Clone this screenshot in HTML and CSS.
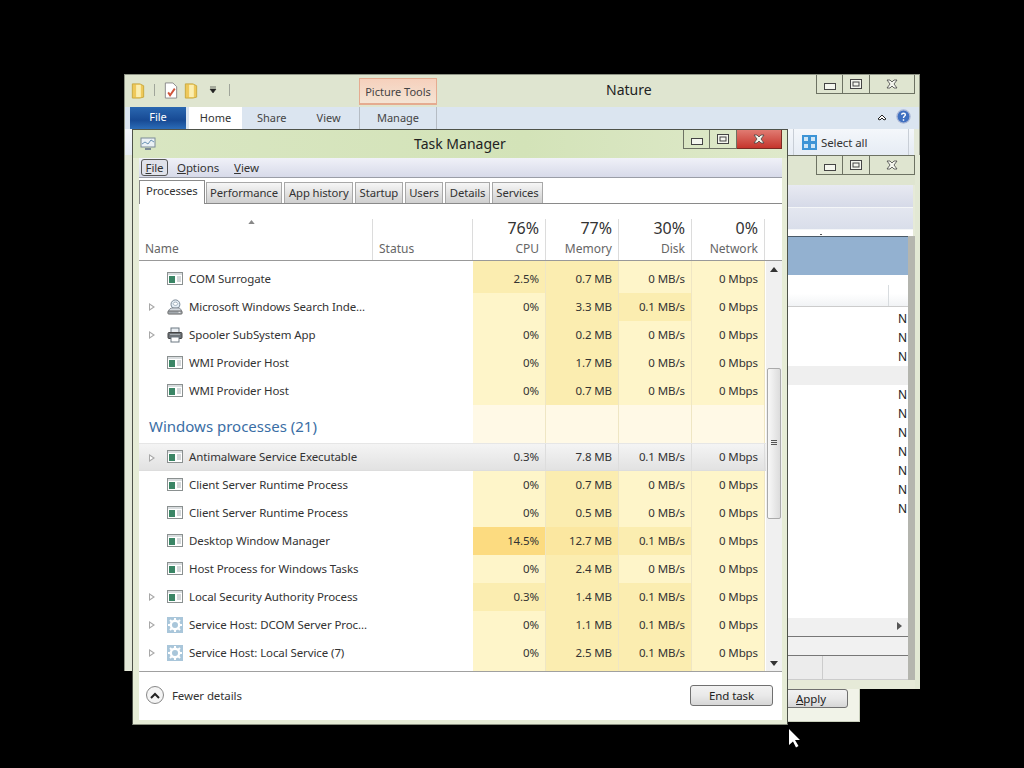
FILE: index.html
```html
<!DOCTYPE html>
<html lang="en">
<head>
  <meta charset="UTF-8">
  <title>Task Manager</title>
  <link rel="stylesheet" href="styles.css">
</head>
<body>
  <svg class="defs" width="0" height="0">
    <symbol id="i-app" viewBox="0 0 16 14">
      <rect x="0.500" y="0.500" width="15" height="12" fill="#fff" stroke="#8a9090"/>
      <rect x="1" y="1" width="14" height="2" fill="#d9dddf"/>
      <rect x="2" y="4" width="6" height="7" fill="#3a8565"/>
      <path d="M10 5h4M10 7h4M10 9h4" stroke="#a8b0b4"/>
    </symbol>
    <symbol id="i-search" viewBox="0 0 18 18">
      <circle cx="9.500" cy="6" r="5" fill="#e4edf5" stroke="#6d7d8c"/>
      <path d="M7 5c0-2 5-2 5 0 0 3-5 3-5 0z" fill="#fff" stroke="#9aa8b4"/>
      <path d="M1.500 14c1-3 3-4 5-4h6c2 0 3 1 4 4z" fill="#d5dae0" stroke="#6d7680"/>
      <rect x="1" y="13.500" width="16" height="3.500" rx="1" fill="#a2a8ad" stroke="#666"/>
      <path d="M13 15h2" stroke="#fff"/>
    </symbol>
    <symbol id="i-printer" viewBox="0 0 16 16">
      <rect x="4" y="1" width="8" height="5" fill="#e9eef3" stroke="#6d7882"/>
      <rect x="1" y="5.500" width="14" height="6" rx="1" fill="#6d7378" stroke="#444"/>
      <path d="M3 7.500h10" stroke="#a4abb0"/>
      <rect x="4" y="10" width="8" height="5" fill="#fff" stroke="#6d7882"/>
    </symbol>
    <symbol id="i-gear" viewBox="0 0 16 16">
      <rect width="16" height="16" fill="#a9c6da"/>
      <circle cx="8" cy="8" r="4.200" fill="none" stroke="#fff" stroke-width="2.400"/>
      <path d="M8 1v3M8 12v3M1 8h3M12 8h3M3 3l2 2M11 11l2 2M13 3l-2 2M5 11l-2 2" stroke="#fff" stroke-width="2"/>
    </symbol>
    <symbol id="i-folder" viewBox="0 0 14 18">
      <path d="M1 2h8l4 2v12l-4 1H1z" fill="#eec85a" stroke="#c9a83c"/>
      <path d="M5 3h5v13H5z" fill="#fbeeb0"/>
    </symbol>
    <symbol id="i-min" viewBox="0 0 12 7">
      <rect x="0.500" y="0.500" width="11" height="6" fill="#f4f6ee" stroke="#444"/>
    </symbol>
    <symbol id="i-max" viewBox="0 0 12 10">
      <rect x="0.500" y="0.500" width="11" height="9" fill="#f4f6ee" stroke="#444"/>
      <rect x="3" y="3" width="6" height="4" fill="none" stroke="#444"/>
    </symbol>
    <symbol id="i-close" viewBox="0 0 12 10">
      <path d="M1 1h3l2 2 2-2h3L8 5l3 4H8L6 7 4 9H1l3-4z" fill="#f4f6ee" stroke="#444" stroke-width="0.800"/>
    </symbol>
  </svg>

  <!-- explorer window behind task manager -->
  <div class="window nature">
    <div class="nature-title">
      <div class="qat">
        <svg class="qat-folder"><use href="#i-folder"/></svg>
        <span class="qat-sep"></span>
        <svg class="qat-doc" viewBox="0 0 14 18">
          <path d="M1 1h8l4 4v12H1z" fill="#fff" stroke="#888"/>
          <path d="M4 11l2 3 5-7" fill="none" stroke="#d0553a" stroke-width="2"/>
        </svg>
        <svg class="qat-folder"><use href="#i-folder"/></svg>
        <svg class="qat-arrow" viewBox="0 0 8 8"><path d="M1 1h6M1 3h6L4 7z" fill="#222" stroke="#222" stroke-width="0.600"/></svg>
        <span class="qat-sep"></span>
      </div>
      <div class="context-tab">Picture Tools</div>
      <div class="nature-name">Nature</div>
      <div class="winbtns">
        <span class="winbtn"><svg class="ico-min"><use href="#i-min"/></svg></span>
        <span class="winbtn"><svg class="ico-max"><use href="#i-max"/></svg></span>
        <span class="winbtn wide"><svg class="ico-close"><use href="#i-close"/></svg></span>
      </div>
    </div>
    <div class="ribbon-tabs">
      <span class="rtab file">File</span>
      <span class="rtab home">Home</span>
      <span class="rtab">Share</span>
      <span class="rtab">View</span>
      <span class="rtab manage">Manage</span>
      <svg class="collapse" viewBox="0 0 10 8"><path d="M1 6l4-4 4 4-2 1-2-2-2 2z" fill="#fff" stroke="#222"/></svg>
      <svg class="help" viewBox="0 0 16 16">
        <circle cx="8" cy="8" r="7" fill="#3f6fc0" stroke="#a9b6d6" stroke-width="1.400"/>
        <path d="M6 6c0-2 4-2 4 0 0 1.500-2 1.500-2 3.500M8 11v1.500" fill="none" stroke="#fff" stroke-width="1.500"/>
      </svg>
    </div>
    <div class="ribbon-body">
      <div class="select-all">
        <svg class="grid-ico" viewBox="0 0 15 15">
          <rect width="15" height="15" fill="#3d94d6"/>
          <path d="M2 2h4v4H2zM9 2h4v4H9zM2 9h4v4H2zM9 9h4v4H9z" fill="#cfe6f6"/>
        </svg>
        Select all
      </div>
    </div>
  </div>

  <!-- second window, only its right side shows -->
  <div class="window folder">
    <div class="folder-title">
      <div class="winbtns">
        <span class="winbtn"><svg class="ico-min"><use href="#i-min"/></svg></span>
        <span class="winbtn"><svg class="ico-max"><use href="#i-max"/></svg></span>
        <span class="winbtn wide"><svg class="ico-close"><use href="#i-close"/></svg></span>
      </div>
    </div>
    <div class="folder-inner">
      <div class="strip"></div>
      <div class="strip second"></div>
      <div class="ruler"><span class="dot"></span></div>
      <div class="selected-band"></div>
      <div class="list-head"></div>
      <div class="list">
        <div class="n-row">N</div>
        <div class="n-row">N</div>
        <div class="n-row">N</div>
        <div class="n-row band"></div>
        <div class="n-row">N</div>
        <div class="n-row">N</div>
        <div class="n-row">N</div>
        <div class="n-row">N</div>
        <div class="n-row">N</div>
        <div class="n-row">N</div>
        <div class="n-row">N</div>
      </div>
      <div class="hscroll"><svg class="harrow" viewBox="0 0 5 8"><path d="M0 0l5 4-5 4z" fill="#555"/></svg></div>
      <div class="status-a"></div>
      <div class="status-b"></div>
    </div>
  </div>

  <div class="window apply-win">
    <button class="btn apply"><u>A</u>pply</button>
  </div>

  <!-- task manager -->
  <div class="window tm">
    <div class="tm-title">
      <svg class="tm-logo" viewBox="0 0 16 14">
        <rect x="1" y="1" width="14" height="9" fill="#eaf1f5" stroke="#7b8a96"/>
        <path d="M2 7l3-2 3 2 3-4 3 2" fill="none" stroke="#6b93b4"/>
        <path d="M5 12h6" stroke="#7b8a96" stroke-width="2"/>
      </svg>
      <div class="tm-name">Task Manager</div>
      <div class="winbtns tm-btns">
        <span class="winbtn"><svg class="ico-min"><use href="#i-min"/></svg></span>
        <span class="winbtn"><svg class="ico-max"><use href="#i-max"/></svg></span>
        <span class="winbtn closing"><svg class="ico-close"><use href="#i-close"/></svg></span>
      </div>
    </div>
    <div class="tm-body">
      <div class="menu">
        <span class="menu-item open"><u>F</u>ile</span>
        <span class="menu-item"><u>O</u>ptions</span>
        <span class="menu-item"><u>V</u>iew</span>
      </div>
      <div class="tabs">
        <span class="tab active">Processes</span>
        <span class="tab">Performance</span>
        <span class="tab">App history</span>
        <span class="tab">Startup</span>
        <span class="tab">Users</span>
        <span class="tab">Details</span>
        <span class="tab">Services</span>
      </div>
      <div class="thead">
        <div class="th name-th"><svg class="sort" viewBox="0 0 8 5"><path d="M0 5l4-5 4 5z" fill="#888"/></svg>Name</div>
        <div class="th status-th">Status</div>
        <div class="th num"><b>76%</b>CPU</div>
        <div class="th num"><b>77%</b>Memory</div>
        <div class="th num"><b>30%</b>Disk</div>
        <div class="th num"><b>0%</b>Network</div>
      </div>
      <div class="tbody">
        <div class="rows">
          <!-- row scrolled mostly out of view -->
          <div class="row">
            <div class="pname"></div>
            <div class="c y2"></div><div class="c y2"></div><div class="c y1"></div><div class="c y1"></div>
          </div>
          <div class="row">
            <div class="pname"><i></i><svg class="pico"><use href="#i-app"/></svg>COM Surrogate</div>
            <div class="c y2">2.5%</div><div class="c y2">0.7 MB</div><div class="c y1">0 MB/s</div><div class="c y1">0 Mbps</div>
          </div>
          <div class="row">
            <div class="pname"><i class="exp"></i><svg class="pico"><use href="#i-search"/></svg>Microsoft Windows Search Inde...</div>
            <div class="c y1">0%</div><div class="c y2">3.3 MB</div><div class="c y2">0.1 MB/s</div><div class="c y1">0 Mbps</div>
          </div>
          <div class="row">
            <div class="pname"><i class="exp"></i><svg class="pico"><use href="#i-printer"/></svg>Spooler SubSystem App</div>
            <div class="c y1">0%</div><div class="c y2">0.2 MB</div><div class="c y1">0 MB/s</div><div class="c y1">0 Mbps</div>
          </div>
          <div class="row">
            <div class="pname"><i></i><svg class="pico"><use href="#i-app"/></svg>WMI Provider Host</div>
            <div class="c y1">0%</div><div class="c y2">1.7 MB</div><div class="c y1">0 MB/s</div><div class="c y1">0 Mbps</div>
          </div>
          <div class="row">
            <div class="pname"><i></i><svg class="pico"><use href="#i-app"/></svg>WMI Provider Host</div>
            <div class="c y1">0%</div><div class="c y2">0.7 MB</div><div class="c y1">0 MB/s</div><div class="c y1">0 Mbps</div>
          </div>
          <div class="row group">
            <div class="pname">Windows processes (21)</div>
            <div class="c"></div><div class="c"></div><div class="c"></div><div class="c"></div>
          </div>
          <div class="row hover">
            <div class="pname"><i class="exp"></i><svg class="pico"><use href="#i-app"/></svg>Antimalware Service Executable</div>
            <div class="c">0.3%</div><div class="c">7.8 MB</div><div class="c">0.1 MB/s</div><div class="c">0 Mbps</div>
          </div>
          <div class="row">
            <div class="pname"><i></i><svg class="pico"><use href="#i-app"/></svg>Client Server Runtime Process</div>
            <div class="c y1">0%</div><div class="c y2">0.7 MB</div><div class="c y1">0 MB/s</div><div class="c y1">0 Mbps</div>
          </div>
          <div class="row">
            <div class="pname"><i></i><svg class="pico"><use href="#i-app"/></svg>Client Server Runtime Process</div>
            <div class="c y1">0%</div><div class="c y2">0.5 MB</div><div class="c y1">0 MB/s</div><div class="c y1">0 Mbps</div>
          </div>
          <div class="row">
            <div class="pname"><i></i><svg class="pico"><use href="#i-app"/></svg>Desktop Window Manager</div>
            <div class="c y4">14.5%</div><div class="c y3">12.7 MB</div><div class="c y2">0.1 MB/s</div><div class="c y1">0 Mbps</div>
          </div>
          <div class="row">
            <div class="pname"><i></i><svg class="pico"><use href="#i-app"/></svg>Host Process for Windows Tasks</div>
            <div class="c y1">0%</div><div class="c y2">2.4 MB</div><div class="c y1">0 MB/s</div><div class="c y1">0 Mbps</div>
          </div>
          <div class="row">
            <div class="pname"><i class="exp"></i><svg class="pico"><use href="#i-app"/></svg>Local Security Authority Process</div>
            <div class="c y2">0.3%</div><div class="c y2">1.4 MB</div><div class="c y2">0.1 MB/s</div><div class="c y1">0 Mbps</div>
          </div>
          <div class="row">
            <div class="pname"><i class="exp"></i><svg class="pico"><use href="#i-gear"/></svg>Service Host: DCOM Server Proc...</div>
            <div class="c y1">0%</div><div class="c y2">1.1 MB</div><div class="c y2">0.1 MB/s</div><div class="c y1">0 Mbps</div>
          </div>
          <div class="row">
            <div class="pname"><i class="exp"></i><svg class="pico"><use href="#i-gear"/></svg>Service Host: Local Service (7)</div>
            <div class="c y1">0%</div><div class="c y2">2.5 MB</div><div class="c y2">0.1 MB/s</div><div class="c y1">0 Mbps</div>
          </div>
          <!-- next row, cut off by the footer -->
          <div class="row">
            <div class="pname"></div>
            <div class="c y1"></div><div class="c y2"></div><div class="c y2"></div><div class="c y1"></div>
          </div>
        </div>
        <div class="vscroll">
          <svg class="varrow" viewBox="0 0 8 5"><path d="M0 5l4-5 4 5z" fill="#333"/></svg>
          <div class="thumb"><span class="grip"></span></div>
          <svg class="varrow down" viewBox="0 0 8 5"><path d="M0 0l4 5 4-5z" fill="#333"/></svg>
        </div>
      </div>
      <div class="tm-foot">
        <div class="fewer">
          <span class="circle"><svg viewBox="0 0 10 7"><path d="M1 6l4-4 4 4" fill="none" stroke="#222" stroke-width="2"/></svg></span>
          Fewer details
        </div>
        <button class="btn end">End task</button>
      </div>
    </div>
  </div>

  <svg class="cursor" viewBox="0 0 13 19"><path d="M1 0l11 11H7l3.500 6-2.500 1.500L5 12.500 1 16z" fill="#fff"/></svg>
</body>
</html>
```

FILE: styles.css
```css
body {
  margin: 0;
  height: 768px;
  background: #000;
  overflow: hidden;
  position: relative;
  font-family: "Noto Sans", sans-serif;
  font-size: 11.5px;
  letter-spacing: -0.1px;
  color: #333;
}

svg { display: block; }
.defs { position: absolute; }

.window { position: absolute; box-sizing: border-box; }

/* caption buttons */
.winbtns { display: flex; }
.winbtn {
  width: 27px;
  height: 19px;
  display: flex;
  align-items: center;
  justify-content: center;
  border: 1px solid #6d7263;
  border-top: none;
  border-left-width: 0;
  box-sizing: border-box;
}
.winbtn:first-child { border-left-width: 1px; }
.winbtn.wide { width: 45px; }
.winbtn.closing {
  width: 45px;
  background: linear-gradient(to bottom, #e07b72, #c5352c);
  border-color: #7a2a22;
}
.ico-min { width: 12px; height: 7px; margin-top: 4px; }
.ico-max { width: 12px; height: 10px; }
.ico-close { width: 12px; height: 10px; }

/* nature window */
.nature {
  left: 124px;
  top: 74px;
  width: 796px;
  height: 597px;
  background: #e4e9d9;
  border: 1px solid #8e9385;
  border-bottom: none;
}
.nature-title {
  height: 32px;
  display: flex;
  background: #dfe5d0;
  position: relative;
}
.qat { display: flex; align-items: center; gap: 6px; padding: 0 0 0 6px; height: 30px; }
.qat-folder { width: 14px; height: 17px; }
.qat-doc { width: 14px; height: 17px; }
.qat-arrow { width: 8px; height: 8px; margin: 0 3px 0 5px; }
.qat-sep { width: 1px; height: 12px; background: #a0a59a; margin: 0 3px; }
.context-tab {
  position: absolute;
  left: 234px;
  top: 3px;
  width: 78px;
  height: 27px;
  line-height: 26px;
  text-align: center;
  font-size: 11px;
  letter-spacing: 0;
  color: #444;
  background: linear-gradient(to bottom, #f6d0bc, #f4e4d4);
  border: 1px solid #e5ab90;
  border-bottom-width: 2px;
  box-sizing: border-box;
}
.nature-name {
  position: absolute;
  left: 481px;
  top: 5px;
  font-size: 14px;
  letter-spacing: 0;
  color: #222;
}
.nature .winbtns { position: absolute; left: 691px; top: 0; }

.ribbon-tabs {
  height: 22px;
  display: flex;
  align-items: flex-end;
  background: #dbe5f0;
  padding-left: 5px;
  position: relative;
  font-size: 11px;
}
.rtab {
  height: 22px;
  line-height: 21px;
  padding: 0 15px;
  letter-spacing: 0;
  color: #444;
  box-sizing: border-box;
}
.rtab.file {
  width: 56px;
  padding: 0;
  text-align: center;
  color: #fff;
  line-height: 20px;
  background: linear-gradient(to bottom, #2a67b0, #174a94 60%, #2b6cb8);
}
.rtab.home { width: 53px; padding: 0; margin-left: 3px; text-align: center; background: #fff; color: #333; }
.rtab.manage { position: absolute; left: 234px; width: 78px; padding: 0; text-align: center; border: 1px solid #b5bcc4; border-width: 0 1px; }
.collapse { position: absolute; left: 752px; top: 6px; width: 10px; height: 8px; }
.help { position: absolute; left: 771px; top: 2px; width: 15px; height: 15px; }

.ribbon-body {
  height: 26px;
  margin-right: 5px;
  background: linear-gradient(to bottom, #f4f7fb, #e6ecf4);
  position: relative;
}
.select-all {
  position: absolute;
  left: 668px;
  top: 0;
  width: 116px;
  height: 26px;
  padding: 1px 0 0 8px;
  box-sizing: border-box;
  display: flex;
  align-items: center;
  gap: 4px;
  border: 1px solid #c8ced6;
  border-width: 0 1px;
}
.grid-ico { width: 15px; height: 15px; }

/* folder window on the right */
.folder {
  left: 700px;
  top: 155px;
  width: 220px;
  height: 534px;
  background: #e6ead8;
  border-right: 5px solid #e2e8d4;
}
.folder::after {
  content: "";
  position: absolute;
  right: 0;
  top: 81px;
  width: 7px;
  bottom: 9px;
  background: #b4b5ae;
}
.folder-title {
  height: 30px;
  display: flex;
  background: #dfe5d0;
  border-top: 1px solid #6d7263;
  box-sizing: border-box;
  padding: 0 0 0 116px;
}
.folder-inner { width: 200px; margin-left: 8px; }
.strip {
  height: 23px;
  margin-right: -5px;
  background: linear-gradient(to bottom, #e8eaf2, #d6dae8);
  border-bottom: 1px solid #f4f6f8;
  box-sizing: border-box;
}
.strip.second { height: 22px; background: linear-gradient(to bottom, #e4e7f0, #d9deea); }
.ruler { height: 6px; margin-right: -5px; background: #fff; position: relative; }
.dot { position: absolute; left: 112px; top: 4px; width: 2px; height: 1px; background: #555; }
.selected-band { height: 39px; background: #93b1d0; border-top: 1px solid #4a5a68; box-sizing: border-box; }
.list-head {
  height: 32px;
  background: linear-gradient(to bottom, #fff, #fff 60%, #f1f3f5);
  border-bottom: 1px solid #ccc;
  box-sizing: border-box;
  position: relative;
}
.list-head::after {
  content: "";
  position: absolute;
  left: 180px;
  top: 10px;
  bottom: 0;
  width: 1px;
  background: #d8dcdf;
}
.list { height: 311px; background: #fff; padding-top: 2px; box-sizing: border-box; }
.n-row {
  height: 19px;
  line-height: 19px;
  padding-left: 190px;
  font-size: 12px;
  color: #222;
  overflow: hidden;
}
.n-row.band { background: #efefef; }
.hscroll { height: 19px; background: #f0f0f0; border-bottom: 1px solid #777; position: relative; box-sizing: border-box; }
.harrow { position: absolute; left: 189px; top: 4px; width: 5px; height: 8px; }
.status-a { height: 19px; background: #f1f1f1; border-bottom: 1px solid #777; box-sizing: border-box; }
.status-b {
  height: 24px;
  background: linear-gradient(to right, #ececec 114px, #ccc 114px, #ccc 115px, #ececec 115px);
  border-bottom: 1px solid #ccc;
  box-sizing: border-box;
}

.apply-win {
  left: 700px;
  top: 689px;
  width: 160px;
  height: 33px;
  background: #f1f3e8;
  border-bottom: 1px solid #c9cfbc;
  border-right: 1px solid #c9cfbc;
}
.btn.apply { position: absolute; left: 74px; top: 0; width: 74px; height: 19px; }

/* task manager */
.tm {
  left: 132px;
  top: 129px;
  width: 656px;
  height: 596px;
  background: #e6ecd6;
  border: 1px solid #4e5249;
  border-bottom-color: #8a8f80;
  padding: 0 6px 4px;
  display: flex;
  flex-direction: column;
}
.tm-title {
  height: 28px;
  flex: none;
  display: flex;
  align-items: center;
  background: linear-gradient(to right, #d9e6c2, #d3e3b8 60%, #dfe9cb);
  margin: 0 -6px;
  position: relative;
}
.tm-logo { width: 16px; height: 14px; margin-left: 7px; }
.tm-name { position: absolute; left: 281px; top: 4px; font-size: 14px; letter-spacing: 0; color: #222; }
.tm-btns { position: absolute; right: 5px; top: 0; }

.tm-body {
  flex: 1;
  display: flex;
  flex-direction: column;
  background: #fff;
  width: 643px;
  min-height: 0;
}

.menu {
  height: 20px;
  flex: none;
  display: flex;
  align-items: center;
  padding-left: 2px;
  gap: 3px;
  background: linear-gradient(to bottom, #f0f1f8, #d7dae9);
  border-bottom: 1px solid #9a9da6;
  box-sizing: border-box;
}
.menu-item { padding: 0 6px; height: 17px; line-height: 18px; box-sizing: border-box; }
.menu-item.open {
  width: 27px;
  background: #e0e2ea;
  border: 1px solid #555;
  border-radius: 3px;
  line-height: 16px;
  padding: 0;
  text-align: center;
}

.tabs {
  height: 26px;
  flex: none;
  display: flex;
  align-items: flex-end;
  gap: 2px;
  border-bottom: 1px solid #8a8a8a;
  box-sizing: border-box;
  font-size: 11.3px;
}
.tab {
  height: 21px;
  line-height: 20px;
  padding: 0 3.500px;
  box-sizing: border-box;
  background: linear-gradient(to bottom, #f6f6f6, #cfcfcf);
  border: 1px solid #a8a8a8;
  border-bottom: none;
}
.tab.active {
  height: 24px;
  padding: 0 6px;
  margin: 0 -1px -1px 0;
  background: #fff;
  border-color: #8a8a8a;
}

.thead {
  height: 57px;
  flex: none;
  display: grid;
  grid-template-columns: 234px 100px 73px 73px 73px 73px 17px;
  grid-template-rows: 56px;
  border-bottom: 1px solid #999;
  box-sizing: border-box;
}
.th {
  border-right: 1px solid #dcdcdc;
  margin-top: 15px;
  display: flex;
  flex-direction: column;
  justify-content: flex-end;
  padding: 0 6px 3px;
  font-size: 12px;
  line-height: 16px;
  letter-spacing: 0;
  color: #666;
  box-sizing: border-box;
  position: relative;
}
.sort { position: absolute; left: 109px; top: 1px; width: 7px; height: 4px; }
.th.num { text-align: right; }
.th b { font-weight: normal; font-size: 16px; line-height: 17px; margin-bottom: 4px; color: #333; }

.tbody {
  flex: 1;
  display: flex;
  min-height: 0;
  overflow: hidden;
}
.rows { width: 627px; margin-top: -24px; overflow: hidden; }
.row {
  height: 28px;
  display: grid;
  grid-template-columns: 334px repeat(4, 73px);
  align-items: stretch;
  line-height: 28px;
}
.pname {
  display: flex;
  align-items: center;
  padding-left: 28px;
  gap: 6px;
  position: relative;
  color: #333;
  white-space: nowrap;
}
.pname i { position: absolute; left: 10px; top: 10px; }
.pname i.exp {
  width: 0;
  height: 0;
  border-left: 6px solid #a8a8a8;
  border-top: 4px solid transparent;
  border-bottom: 4px solid transparent;
}
.pname i.exp::after {
  content: "";
  position: absolute;
  left: -5px;
  top: -2px;
  border-left: 3px solid #fff;
  border-top: 2px solid transparent;
  border-bottom: 2px solid transparent;
}
.pico { width: 16px; height: 16px; flex: none; }

.c {
  text-align: right;
  padding-right: 6px;
  border-right: 1px solid #efe6c4;
}
.y1 { background: #fef5c9; }
.y2 { background: #fbedb0; }
.y3 { background: #fbe7a0; }
.y4 { background: #fcdb80; }

.row.group { height: 38px; line-height: 32px; }
.row.group .pname { padding: 4px 0 0 10px; font-size: 15px; letter-spacing: 0; color: #3a6ea5; }
.row.group .c { background: #fff9e6; }

.row.hover {
  background: linear-gradient(to bottom, #f4f4f4, #e2e2e2);
  border-top: 1px solid #e6e6e6;
  border-bottom: 1px solid #ddd;
  box-sizing: border-box;
  line-height: 26px;
}
.row.hover .c { background: none; border-right-color: #ddd; }

.vscroll {
  width: 16px;
  background: #f0f0f0;
  position: relative;
}
.varrow { position: absolute; left: 4px; top: 6px; width: 8px; height: 5px; }
.varrow.down { top: auto; bottom: 5px; }
.thumb {
  position: absolute;
  left: 1px;
  top: 107px;
  width: 14px;
  height: 151px;
  background: linear-gradient(to right, #f8f8f8, #dcdcdc);
  border: 1px solid #aaa;
  border-radius: 2px;
  box-sizing: border-box;
}
.grip {
  position: absolute;
  left: 3px;
  top: 71px;
  width: 6px;
  height: 6px;
  background: repeating-linear-gradient(to bottom, #555 0, #555 1px, transparent 1px, transparent 2px);
}

.tm-foot {
  height: 49px;
  flex: none;
  display: flex;
  align-items: center;
  justify-content: space-between;
  padding: 0 9px 2px 7px;
  border-top: 1px solid #a0a0a0;
  box-sizing: border-box;
}
.fewer { display: flex; align-items: center; gap: 8px; }
.circle {
  width: 18px;
  height: 18px;
  border: 1px solid #888;
  border-radius: 50%;
  box-sizing: border-box;
  display: flex;
  align-items: center;
  justify-content: center;
  background: #f4f4f4;
}
.circle svg { width: 10px; height: 7px; }

.btn {
  font-family: "Noto Sans", sans-serif;
  font-size: 11.5px;
  letter-spacing: -0.1px;
  color: #222;
  padding: 0;
  border: 1px solid #707070;
  border-radius: 3px;
  background: linear-gradient(to bottom, #f2f2f2, #e9e9e9 50%, #d6d6d6);
}
.btn.end { width: 83px; height: 21px; }

.cursor { position: absolute; left: 788px; top: 729px; width: 13px; height: 19px; }
```
